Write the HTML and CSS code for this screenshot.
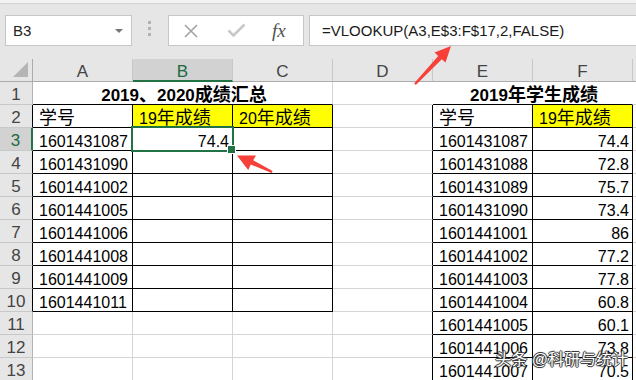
FILE: index.html
```html
<!DOCTYPE html>
<html>
<head>
  <meta charset="UTF-8" />
  <title>VLOOKUP 成绩汇总</title>
  <link rel="stylesheet" href="styles.css">
</head>
<body>

<!-- name box + formula bar -->
<div class="bar">
  <div class="namebox">B3<span class="caret"></span></div>
  <div class="grip"></div>
  <div class="fbtns">
    <svg class="ico-x" width="16" height="16" viewBox="0 0 16 16"><path d="M2 2L14 14M14 2L2 14" stroke="#a3a3a3" stroke-width="1.6" fill="none"/></svg>
    <svg class="ico-ok" width="19" height="15" viewBox="0 0 19 15"><path d="M1.5 7.5L6.5 12.5L17.5 1.5" stroke="#c8c8c8" stroke-width="2.6" fill="none"/></svg>
    <i class="fx">fx</i>
  </div>
  <div class="formula">=VLOOKUP(A3,E$3:F$17,2,FALSE)</div>
</div>

<!-- sheet -->
<div class="sheet">
  <div class="c corner"><span class="tri"></span></div>
  <div class="c ch">A</div><div class="c ch sel">B</div><div class="c ch">C</div><div class="c ch">D</div><div class="c ch">E</div><div class="c ch">F</div><div class="c ch"></div>

  <div class="c rh">1</div>
  <div class="c t u">2019<span class="zh">、</span>2020<span class="zh">成绩汇总</span></div>
  <div class="c w"></div>
  <div class="c t t2 u w">2019<span class="zh">年学生成绩</span></div>
  <div class="c"></div>

  <div class="c rh k">2</div>
  <div class="c k u"><span class="zh">学号</span></div>
  <div class="c k u y">19<span class="zh">年成绩</span></div>
  <div class="c k u y">20<span class="zh">年成绩</span></div>
  <div class="c k"></div>
  <div class="c k u"><span class="zh">学号</span></div>
  <div class="c k u y">19<span class="zh">年成绩</span></div>
  <div class="c"></div>

  <div class="c rh sel">3</div>
  <div class="c k u">1601431087</div><div class="c k u n cur">74.4</div><div class="c k u"></div><div class="c k"></div>
  <div class="c k u">1601431087</div><div class="c k u n">74.4</div><div class="c"></div>

  <div class="c rh k">4</div>
  <div class="c k u">1601431090</div><div class="c k u"></div><div class="c k u"></div><div class="c k"></div>
  <div class="c k u">1601431088</div><div class="c k u n">72.8</div><div class="c"></div>

  <div class="c rh k">5</div>
  <div class="c k u">1601441002</div><div class="c k u"></div><div class="c k u"></div><div class="c k"></div>
  <div class="c k u">1601431089</div><div class="c k u n">75.7</div><div class="c"></div>

  <div class="c rh k">6</div>
  <div class="c k u">1601441005</div><div class="c k u"></div><div class="c k u"></div><div class="c k"></div>
  <div class="c k u">1601431090</div><div class="c k u n">73.4</div><div class="c"></div>

  <div class="c rh k">7</div>
  <div class="c k u">1601441006</div><div class="c k u"></div><div class="c k u"></div><div class="c k"></div>
  <div class="c k u">1601441001</div><div class="c k u n">86</div><div class="c"></div>

  <div class="c rh k">8</div>
  <div class="c k u">1601441008</div><div class="c k u"></div><div class="c k u"></div><div class="c k"></div>
  <div class="c k u">1601441002</div><div class="c k u n">77.2</div><div class="c"></div>

  <div class="c rh k">9</div>
  <div class="c k u">1601441009</div><div class="c k u"></div><div class="c k u"></div><div class="c k"></div>
  <div class="c k u">1601441003</div><div class="c k u n">77.8</div><div class="c"></div>

  <div class="c rh k">10</div>
  <div class="c k u">1601441011</div><div class="c k u"></div><div class="c k u"></div><div class="c k"></div>
  <div class="c k u">1601441004</div><div class="c k u n">60.8</div><div class="c"></div>

  <div class="c rh">11</div>
  <div class="c"></div><div class="c"></div><div class="c"></div><div class="c k"></div>
  <div class="c k u">1601441005</div><div class="c k u n">60.1</div><div class="c"></div>

  <div class="c rh">12</div>
  <div class="c"></div><div class="c"></div><div class="c"></div><div class="c k"></div>
  <div class="c k u">1601441006</div><div class="c k u n">73.8</div><div class="c"></div>

  <div class="c rh">13</div>
  <div class="c"></div><div class="c"></div><div class="c"></div><div class="c k"></div>
  <div class="c k u">1601441007</div><div class="c k u n">70.5</div><div class="c"></div>
</div>

<!-- red annotation arrows -->
<svg class="marks" width="636" height="380" viewBox="0 0 636 380">
  <polygon fill="#f7403a" points="451,46 445.5,62.5 441.8,59.3 415.8,85 414.2,83.2 438.2,55.9 434.5,52.5"/>
  <polygon fill="#f7403a" points="237,155.5 256,155.5 253.2,160.3 272.6,171 271.6,173 250.8,164.5 248.2,170"/>
</svg>

<div class="wm">头条 @科研与统计</div>

</body>
</html>
```

FILE: styles.css
```css
* {
  box-sizing: border-box;
}

html, body {
  margin: 0;
  overflow: hidden;
}

body {
  position: relative;
  width: 636px;
  height: 380px;
  font-family: "Liberation Sans", "Noto Sans CJK SC", sans-serif;
  background: #fff;
  color: #000;
}

/* formula bar */
.bar {
  height: 59px;
  display: flex;
  align-items: flex-start;
  padding: 15px 0 0 5px;
  background: #e6e6e6;
  box-shadow: inset 0 3px 0 #f2f2f2, inset 0 4px 0 #d4d4d4;
}

.namebox {
  width: 127px;
  height: 31px;
  display: flex;
  align-items: center;
  padding-left: 7px;
  background: #fff;
  border: 1px solid #c6c6c6;
  font-size: 15px;
  color: #222;
}

.caret {
  margin-left: auto;
  margin-right: 8px;
  border-left: 4px solid transparent;
  border-right: 4px solid transparent;
  border-top: 4px solid #767676;
}

.grip {
  width: 3px;
  height: 3px;
  margin: 6px 17px 0 16px;
  background: #b3b3b3;
  box-shadow: 0 6px 0 #b3b3b3, 0 12px 0 #b3b3b3;
}

.fbtns {
  width: 136px;
  height: 31px;
  display: flex;
  align-items: center;
  padding-left: 14px;
  background: #fff;
  border: 1px solid #c6c6c6;
}

.ico-ok {
  margin-left: 28px;
}

.fx {
  margin-left: 26px;
  font-family: "Liberation Serif", serif;
  font-size: 19px;
  color: #505050;
}

.formula {
  flex: 1;
  height: 31px;
  margin-left: 5px;
  padding: 1px 0 0 12px;
  background: #fff;
  border: 1px solid #c6c6c6;
  border-right: none;
  font-size: 15px;
  line-height: 28px;
  color: #1a1a1a;
}

/* grid */
.sheet {
  display: grid;
  grid-template-columns: 33px repeat(6, 100px) 1fr;
  grid-auto-rows: 23px;
}

.c {
  display: flex;
  align-items: flex-end;
  padding: 0 3px 0 6px;
  border-right: 1px solid #d4d4d4;
  border-bottom: 1px solid #d4d4d4;
  font-size: 16px;
  line-height: 17px;
  white-space: nowrap;
}

.zh {
  font-size: 18px;
}

.corner {
  justify-content: flex-end;
  padding: 0 4px 4px 0;
  background: #e6e6e6;
  border-right-color: #ababab;
  border-bottom-color: #ababab;
}

.tri {
  width: 0;
  height: 0;
  border-left: 15px solid transparent;
  border-bottom: 15px solid #b5b5b5;
}

.ch {
  justify-content: center;
  padding: 0 0 1px 0;
  background: #e6e6e6;
  border-right-color: #c8c8c8;
  border-bottom-color: #ababab;
  color: #444;
  font-size: 17px;
}

.rh {
  justify-content: center;
  padding: 0 0 1px 0;
  background: #e6e6e6;
  border-right-color: #b4b4b4;
  border-bottom-color: #c8c8c8;
  color: #444;
  font-size: 17px;
}

/* black cell borders */
.k {
  border-right-color: #000;
}
.u {
  border-bottom-color: #000;
}

.w {
  border-right-color: #fff;
}

.n {
  justify-content: flex-end;
}

.y {
  background: #ffff00;
}

.t {
  grid-column: span 3;
  justify-content: center;
  font-size: 17px;
  font-weight: bold;
}
.t2 {
  grid-column: span 2;
}

/* selection */
.ch.sel {
  background: #d2d2d2;
  color: #1d6b41;
  border-bottom: 2px solid #217346;
  padding-bottom: 0;
}

.rh.sel {
  background: #d2d2d2;
  color: #1d6b41;
  border-right: 2px solid #217346;
}

.cur {
  position: relative;
}
.cur::after {
  content: "";
  position: absolute;
  left: -2px;
  top: -2px;
  right: -2px;
  bottom: -2px;
  border: 2px solid #217346;
}
.cur::before {
  content: "";
  position: absolute;
  right: -4px;
  bottom: -4px;
  width: 7px;
  height: 7px;
  background: #217346;
  border: 1px solid #fff;
  z-index: 1;
}

/* overlays */
.marks {
  position: absolute;
  left: 0;
  top: 0;
  pointer-events: none;
}

.wm {
  position: absolute;
  right: 8px;
  bottom: 12px;
  font-size: 16px;
  line-height: 16px;
  color: #fff;
  text-shadow: 1px 0 0 #3c3c3c, -1px 0 0 #3c3c3c, 0 1px 0 #3c3c3c, 0 -1px 0 #3c3c3c, 0 0 2px #333;
}
```
